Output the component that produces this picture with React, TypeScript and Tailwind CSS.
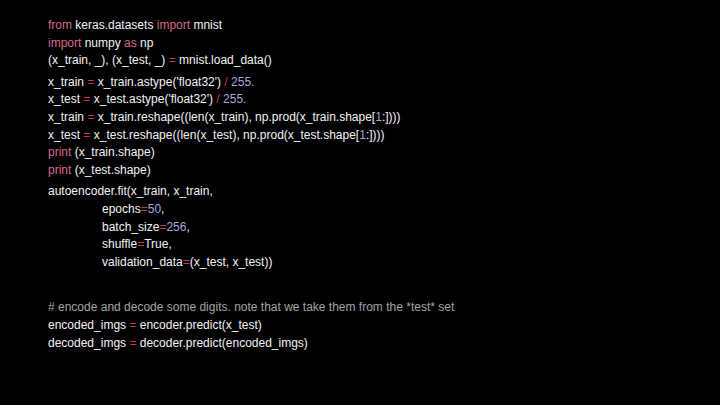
const K = "text-[#d76a85]"; // keywords
const O = "text-[#c23b4b]"; // operators
const N = "text-[#a9a6dc]"; // numbers

function Kw({ children }: { children: React.ReactNode }) {
  return <span className={K}>{children}</span>;
}
function Op({ children }: { children: React.ReactNode }) {
  return <span className={O}>{children}</span>;
}
function Num({ children }: { children: React.ReactNode }) {
  return <span className={N}>{children}</span>;
}

export default function App() {
  return (
    <div className="h-[405px] w-[720px] overflow-hidden bg-black pl-12 pt-[17px] font-['Liberation_Sans',Arial,sans-serif] text-[12px] leading-[17.6px] text-[#f2f2f2]">
      <div className="whitespace-pre">
        <div>
          <Kw>from</Kw> keras.datasets <Kw>import</Kw> mnist
        </div>
        <div>
          <Kw>import</Kw> numpy <Kw>as</Kw> np
        </div>
        <div>
          (x_train, _), (x_test, _) <Op>=</Op> mnist.load_data()
        </div>
      </div>

      <div className="mt-[4px] whitespace-pre">
        <div>
          x_train <Op>=</Op> x_train.astype('float32') <Op>/</Op> <Num>255.</Num>
        </div>
        <div>
          x_test <Op>=</Op> x_test.astype('float32') <Op>/</Op> <Num>255.</Num>
        </div>
        <div>
          x_train <Op>=</Op> x_train.reshape((len(x_train), np.prod(x_train.shape[<Num>1</Num>:])))
        </div>
        <div>
          x_test <Op>=</Op> x_test.reshape((len(x_test), np.prod(x_test.shape[<Num>1</Num>:])))
        </div>
        <div>
          <Kw>print</Kw> (x_train.shape)
        </div>
        <div>
          <Kw>print</Kw> (x_test.shape)
        </div>
      </div>

      <div className="mt-[4px] whitespace-pre">
        <div>autoencoder.fit(x_train, x_train,</div>
        <div className="pl-[54px]">
          epochs<Op>=</Op><Num>50</Num>,
        </div>
        <div className="pl-[54px]">
          batch_size<Op>=</Op><Num>256</Num>,
        </div>
        <div className="pl-[54px]">
          shuffle<Op>=</Op>True,
        </div>
        <div className="pl-[54px]">
          validation_data<Op>=</Op>(x_test, x_test))
        </div>
      </div>

      <div className="mt-[28px] whitespace-pre">
        <div className="text-[#a3a3a3]">
          # encode and decode some digits. note that we take them from the *test* set
        </div>
        <div>
          encoded_imgs <Op>=</Op> encoder.predict(x_test)
        </div>
        <div>
          decoded_imgs <Op>=</Op> decoder.predict(encoded_imgs)
        </div>
      </div>
    </div>
  );
}
